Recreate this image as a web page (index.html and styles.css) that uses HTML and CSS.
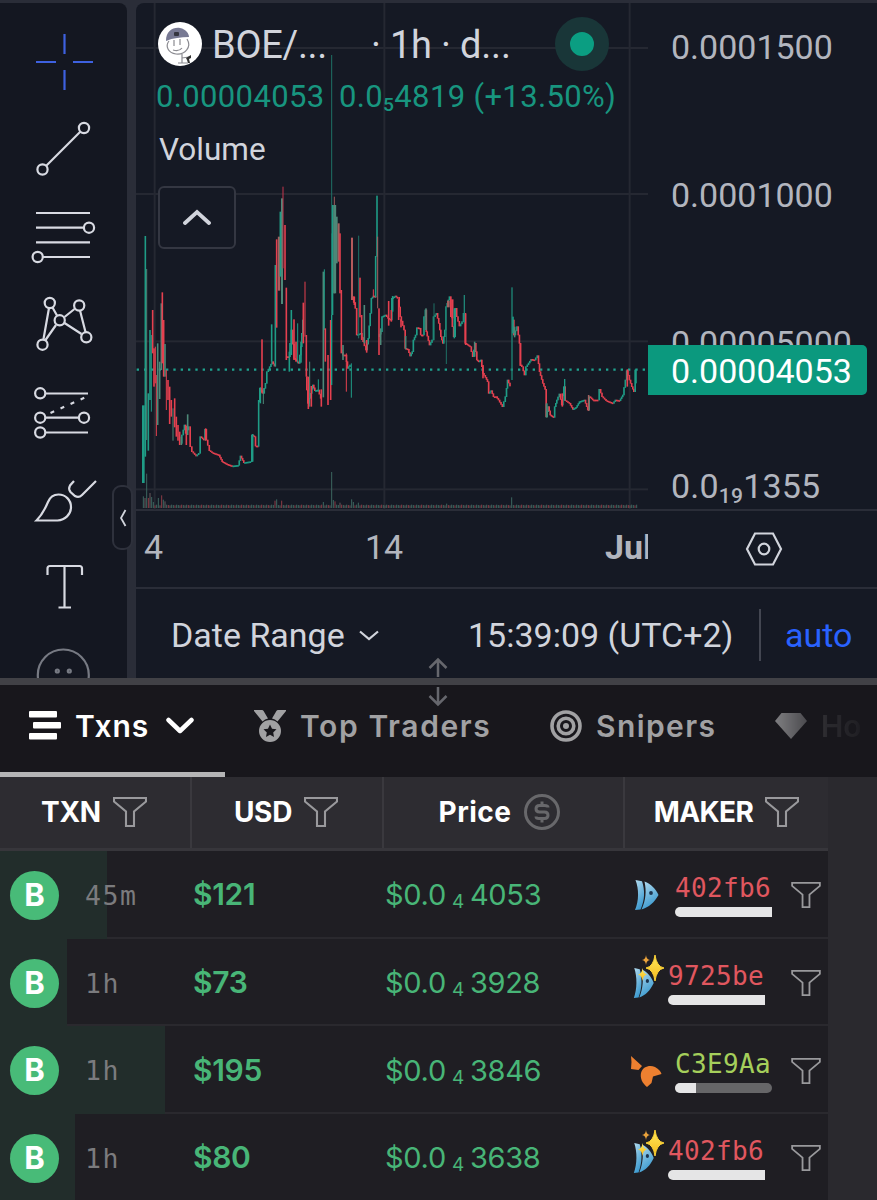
FILE: index.html
```html
<!DOCTYPE html>
<html lang="en">

<head>
    <meta charset="UTF-8">
    <meta name="viewport" content="width=device-width, initial-scale=1.0">
    <title>BOE Chart</title>
    <link rel="stylesheet" href="styles.css">
</head>

<body>
    <!-- Shared icons -->
    <svg class="defs" width="0" height="0">
        <defs>
            <linearGradient id="fish-blue" x1="0" y1="0" x2="0.4" y2="1">
                <stop offset="0" stop-color="#b5dcee" />
                <stop offset="1" stop-color="#3d9bd0" />
            </linearGradient>
            <linearGradient id="gold" x1="0" y1="0" x2="0" y2="1">
                <stop offset="0" stop-color="#ffe95c" />
                <stop offset="1" stop-color="#f5b91c" />
            </linearGradient>
        </defs>
        <symbol id="filter" viewBox="0 0 34 30">
            <path d="M1 1H33V4.500L21 14.500V29H13V14.500L1 4.500Z" fill="none" stroke="currentColor" stroke-width="2.100" />
        </symbol>
        <symbol id="fish" viewBox="0 0 26 32" preserveAspectRatio="none">
            <path d="M1.500 1L8 2.200C11 11 11 21 6.500 30.500L1 31C5 22 5 10 1.500 1Z" fill="url(#fish-blue)" />
            <path d="M10.500 2.500C17 5 22 10 24.500 16C20 24 15 28 7.500 30.500C12 21 12.500 12 10.500 2.500Z" fill="url(#fish-blue)" />
            <circle cx="17" cy="14" r="1.900" fill="#1d3550" />
        </symbol>
        <symbol id="sparkles" viewBox="0 0 32 26">
            <path d="M23 0Q24.500 11.500 32 13Q24.500 14.500 23 26Q21.500 14.500 14 13Q21.500 11.500 23 0Z" fill="url(#gold)" stroke="#f9cf35" />
            <path d="M14 0Q14.400 4.600 18 5Q14.400 5.400 14 10Q13.600 5.400 10 5Q13.600 4.600 14 0Z" fill="#e9a23b" />
            <path d="M10.500 13Q11.200 18.800 15 19.500Q11.200 20.200 10.500 26Q9.800 20.200 6 19.500Q9.800 18.800 10.500 13Z" fill="url(#gold)" />
        </symbol>
    </svg>

    <!-- Chart -->
    <div class="chart-area">
        <div class="toolbar">
            <svg class="tools" width="127" height="675" viewBox="0 3 127 675">
                <path class="cursor" d="M64.500 34V54M64.500 70V90M36 62H56M73 62H93" />
                <g class="tool">
                    <path d="M46.500 165.500L80.500 131.500" />
                    <circle cx="42.500" cy="169.500" r="5.100" />
                    <circle cx="84" cy="128" r="5.100" />
                </g>
                <g class="tool">
                    <path d="M36 213H90M36 227.700H83.500M36 242.300H90M43 257H90" />
                    <circle cx="89" cy="227.700" r="5.100" />
                    <circle cx="37.700" cy="257" r="5.100" />
                </g>
                <g class="tool">
                    <path d="M49 308L43.500 339M52.500 307.500L57 315.500M64.500 317L74.500 309M80 310.500L85.500 332M64.500 323L81.500 334M56 325L45.500 340" />
                    <circle cx="49.800" cy="303" r="5.100" />
                    <circle cx="79.200" cy="305.500" r="5.100" />
                    <circle cx="59.700" cy="320.300" r="5.100" />
                    <circle cx="86.300" cy="337.300" r="5.100" />
                    <circle cx="42.500" cy="344.700" r="5.100" />
                </g>
                <g class="tool">
                    <path d="M45.500 393.500H88M45.500 417.700H79M45.500 432.500H88" />
                    <path d="M50.500 413L85 397.500" stroke-dasharray="4 7" />
                    <circle cx="40.200" cy="393.300" r="5.100" />
                    <circle cx="40.200" cy="417.700" r="5.100" />
                    <circle cx="84" cy="417.700" r="5.100" />
                    <circle cx="40.200" cy="432.500" r="5.100" />
                </g>
                <g class="tool">
                    <path d="M36.500 520.500C42 515 45.500 508 48 502C50 497 54 494.500 58.500 494.500C65.500 494.500 71 500 71 507C71 514.500 65 520 57.500 520.500Z" />
                    <path d="M74 481L70 485.500C68.500 488 69 490 70.500 492L75 496C77.500 497.500 80 497 82 495L96 481" />
                </g>
                <path class="tool" d="M47.500 575V568.500Q47.500 566 50 566H79.500Q82 566 82 568.500V575M64.500 566V607M58.500 607.500H71" />
                <g class="tool smile">
                    <circle cx="63.300" cy="675" r="25.500" />
                    <circle cx="57.300" cy="671" r="1.500" />
                    <circle cx="69.300" cy="671" r="1.500" />
                </g>
            </svg>
            <button class="collapse" aria-label="Collapse toolbar">
                <svg width="8" height="18" viewBox="0 0 8 18"><path d="M6.500 1L2 9L6.500 17" /></svg>
            </button>
        </div>

        <div class="chart">
            <div class="pane-row">
                <div class="pane">
                    <svg id="plot" width="512" height="507" viewBox="0 -531 1536 1521"></svg>
                    <div class="legend">
                        <div class="symbol-row">
                            <svg class="coin" width="44" height="44" viewBox="0 0 44 44">
                                <circle cx="22" cy="22" r="22" fill="#fff" />
                                <path d="M11 19C7 24 10 31 18 32C27 33 34 25 29 17M16 18V24M22 17V23M15 28Q21 30 24 26M24 32V41M20 41H30M24 36L31 35" fill="none" stroke="#8b8b91" stroke-width="1.200" />
                                <path d="M8 19C8 9 15 5 22 6C28 7 31 12 31 15C23 15 15 16 8 19Z" fill="#777993" />
                                <rect x="16" y="10" width="5" height="4" rx="1" fill="#34353f" />
                                <path d="M28 36L33 33V36L31 37L32 41H30L29 38Z" fill="#333" />
                            </svg>
                            <span class="name">BOE/...</span>
                            <span class="interval">· 1h · d...</span>
                            <span class="status"></span>
                        </div>
                        <div class="values">
                            <span class="last">0.00004053</span>
                            <span class="change">0.0<sub>5</sub>4819 (+13.50%)</span>
                        </div>
                        <div class="volume">Volume</div>
                        <button class="fold" aria-label="Hide indicators">
                            <svg width="28" height="18" viewBox="0 0 28 18"><path d="M2 14L14 3L26 14" /></svg>
                        </button>
                    </div>
                </div>
                <div class="price-axis">
                    <span>0.0001500</span>
                    <span>0.0001000</span>
                    <span>0.00005000</span>
                    <span class="low">0.0<sub>19</sub>1355</span>
                    <div class="price-tag">0.00004053</div>
                </div>
            </div>
            <div class="time-axis">
                <div class="dates">
                    <span class="d1">4</span>
                    <span class="d2">14</span>
                    <span class="d3">Jul</span>
                </div>
                <svg class="settings" width="38" height="34" viewBox="0 0 38 34">
                    <path d="M10 1.500H28L36 17L28 32.500H10L2 17Z" />
                    <circle cx="19" cy="17" r="5.300" />
                </svg>
            </div>
            <div class="bottom-bar">
                <span class="range">Date Range</span>
                <svg class="caret" width="20" height="11" viewBox="0 0 20 11"><path d="M1 1.500L10 9L19 1.500" /></svg>
                <span class="clock">15:39:09 (UTC+2)</span>
                <span class="sep"></span>
                <span class="auto">auto</span>
            </div>
        </div>
    </div>

    <div class="splitter">
        <svg width="20" height="50" viewBox="0 0 20 50">
            <path d="M10 20V3M1.500 11L10 2.500L18.500 11M10 30V47M1.500 39L10 47.500L18.500 39" />
        </svg>
    </div>

    <!-- Tabs -->
    <nav class="tabs">
        <a class="tab active">
            <svg width="32" height="30" viewBox="0 0 32 30" fill="currentColor">
                <rect width="28" height="6.500" rx="1" /><rect x="4" y="11" width="28" height="6.500" rx="1" /><rect y="22" width="28" height="6.500" rx="1" />
            </svg>
            <span>Txns</span>
            <svg class="chevron" width="28" height="18" viewBox="0 0 28 18"><path d="M2.500 3L14 14L25.500 3" /></svg>
        </a>
        <a class="tab traders">
            <svg width="32" height="32" viewBox="0 0 32 32" fill="currentColor">
                <path d="M0 0H8Q9 0 9.600 1L14 8.500Q11 9 8.500 11.500L0 1Z" />
                <path d="M32 0H24Q23 0 22.400 1L18 8.500Q21 9 23.500 11.500L32 1Z" />
                <path fill-rule="evenodd" d="M16 10A11 11 0 1 1 16 32A11 11 0 1 1 16 10ZM16 14.500L14 18.700L9.500 19.300L12.800 22.500L12 27L16 24.800L20 27L19.200 22.500L22.500 19.300L18 18.700Z" />
            </svg>
            <span>Top Traders</span>
        </a>
        <a class="tab snipers">
            <svg width="32" height="32" viewBox="0 0 32 32" fill="none" stroke="currentColor" stroke-width="3.600">
                <circle cx="16" cy="16" r="14" /><circle cx="16" cy="16" r="7.800" />
                <circle cx="16" cy="16" r="3" fill="currentColor" stroke="none" />
            </svg>
            <span>Snipers</span>
        </a>
        <a class="tab holders">
            <svg width="32" height="26" viewBox="0 0 32 26" fill="currentColor"><path d="M6.500 0H25.500L32 8L16 26L0 8Z" /></svg>
            <span>Ho</span>
        </a>
    </nav>

    <!-- Transactions -->
    <div class="table">
        <div class="thead">
            <div class="th"><span class="h-txn">TXN</span><svg class="filter"><use href="#filter" /></svg></div>
            <div class="th"><span class="h-usd">USD</span><svg class="filter"><use href="#filter" /></svg></div>
            <div class="th price"><span class="h-price">Price</span>
                <svg class="dollar" width="36" height="36" viewBox="0 0 36 36">
                    <circle cx="18" cy="18" r="16.500" />
                    <path d="M18 7.500V11M18 25V28.500M24 13.500Q24 11.500 20.500 11.500H15.500Q12 11.500 12 14.700Q12 18 15.500 18H20.500Q24 18 24 21.300Q24 24.500 20.500 24.500H15Q12 24.500 12 22.500" />
                </svg>
            </div>
            <div class="th"><span class="h-maker">MAKER</span><svg class="filter"><use href="#filter" /></svg></div>
        </div>
        <div id="rows"></div>
    </div>

    <script src="script.js"></script>
</body>

</html>
```

FILE: styles.css
```css
* {
    box-sizing: border-box;
}

body {
    margin: 0;
    width: 877px;
    height: 1200px;
    overflow: hidden;
    background: #2a292e;
    font-family: Roboto, sans-serif;
    color: #d1d4dc;
}

button {
    padding: 0;
    background: #151924;
}

svg {
    display: block;
    flex: none;
}

.defs {
    position: absolute;
}

/* Chart */
.chart-area {
    display: flex;
    gap: 9px;
    height: 678px;
    padding-top: 3px;
    background: #2a2d38;
}

.toolbar {
    position: relative;
    width: 127px;
    background: #141721;
    border-top-right-radius: 8px;
}

.tool,
.cursor {
    fill: none;
    stroke: #d8dae2;
    stroke-width: 2.2;
}

.cursor {
    stroke: #3e61e0;
}

.smile {
    stroke: #777a83;
}

.collapse {
    position: absolute;
    left: 112px;
    top: 482px;
    width: 21px;
    height: 65px;
    border: 2px solid #2e313c;
    border-radius: 9px;
    background: #141721;
    display: flex;
    align-items: center;
    justify-content: center;
}

.collapse path {
    fill: none;
    stroke: #d1d4dc;
    stroke-width: 1.8;
}

.chart {
    flex: 1;
    display: flex;
    flex-direction: column;
    background: #151924;
    border-top-left-radius: 8px;
}

.pane-row {
    display: flex;
    height: 508px;
    border-bottom: 2px solid #2a2d38;
}

.pane {
    position: relative;
    width: 512px;
}

.legend {
    position: absolute;
    left: 22px;
    top: 14px;
    width: 490px;
}

.symbol-row {
    display: flex;
    align-items: center;
    height: 54px;
    font-size: 38px;
    white-space: pre;
}

.name {
    width: 159px;
    margin-left: 10px;
    padding-top: 2px;
    letter-spacing: -0.3px;
}

.interval {
    width: 184px;
    padding-top: 2px;
    letter-spacing: -0.2px;
}

.status {
    width: 54px;
    height: 54px;
    border-radius: 50%;
    border: 15px solid #193638;
    background: #0b9e82;
}

.values {
    display: flex;
    height: 52px;
    line-height: 52px;
    margin-left: -2px;
    font-size: 31px;
    letter-spacing: 0.35px;
    color: #18957f;
}

.last {
    width: 183px;
}

.change {
    letter-spacing: 0.35px;
}

sub {
    font-size: 0.62em;
    font-weight: 500;
    vertical-align: baseline;
    position: relative;
    top: 0.22em;
    line-height: 1;
}

.volume {
    height: 52px;
    line-height: 53px;
    padding-left: 1px;
    font-size: 31.5px;
}

.fold {
    display: flex;
    align-items: center;
    justify-content: center;
    width: 78px;
    height: 63px;
    margin-top: 11px;
    border: 2px solid #343742;
    border-radius: 6px;
}

.fold path {
    fill: none;
    stroke: #d1d4dc;
    stroke-width: 3.8;
    stroke-linecap: round;
}

.price-axis {
    position: relative;
    flex: 1;
    display: flex;
    flex-direction: column;
    gap: 108px;
    padding: 24px 0 0 23px;
    font-size: 34px;
    line-height: 40px;
    color: #b2b5be;
}

.price-axis .low {
    margin-top: -5px;
    letter-spacing: 0.2px;
}

.price-tag {
    position: absolute;
    left: 0;
    top: 342px;
    width: 219px;
    height: 50px;
    padding-left: 23px;
    line-height: 53px;
    background: #0b997e;
    color: #fff;
    border-radius: 0 5px 5px 0;
}

.time-axis {
    display: flex;
    align-items: center;
    height: 78px;
    border-bottom: 2px solid #2a2d38;
}

.dates {
    display: flex;
    width: 512px;
    margin-top: -4px;
    overflow: hidden;
    font-size: 34px;
    color: #b2b5be;
}

.dates span {
    flex: none;
}

.d1 {
    width: 221px;
    padding-left: 8px;
}

.d2 {
    width: 248px;
    padding-left: 8px;
}

.d3 {
    font-weight: 700;
}

.settings {
    margin-left: 97px;
}

.settings path,
.settings circle,
.caret path {
    fill: none;
    stroke: #d1d4dc;
    stroke-width: 2.2;
}

.bottom-bar {
    display: flex;
    align-items: center;
    flex: 1;
    padding: 3px 0 0 35px;
    font-size: 34px;
    white-space: nowrap;
}

.range {
    width: 188px;
}

.clock {
    width: 291px;
    margin-left: 89px;
}

.sep {
    width: 2px;
    height: 52px;
    background: #434651;
}

.auto {
    margin-left: 24px;
    color: #2962ff;
}

.splitter {
    position: relative;
    height: 7px;
    background: #414146;
}

.splitter svg {
    position: absolute;
    left: 428px;
    top: -21px;
}

.splitter path {
    fill: none;
    stroke: #66676d;
    stroke-width: 2.5;
}

/* Tabs */
.tabs {
    display: flex;
    height: 92px;
    background: #18171c;
    overflow: hidden;
    font-family: Inter, sans-serif;
    font-size: 30px;
    font-weight: 600;
    color: #a1a1a3;
}

.tab {
    display: flex;
    align-items: center;
    flex: none;
    padding-bottom: 10px;
}

.active {
    width: 225px;
    padding: 0 0 5px 29px;
    color: #fff;
    border-bottom: 5px solid #b5b5b6;
}

.active span {
    width: 91px;
    margin-left: 14px;
    letter-spacing: 0.9px;
}

.chevron path {
    fill: none;
    stroke: #fff;
    stroke-width: 4.5;
    stroke-linecap: round;
    stroke-linejoin: round;
}

.traders {
    width: 325px;
    padding-left: 29px;
    letter-spacing: 1.6px;
}

.traders span,
.snipers span {
    margin-left: 14px;
}

.snipers {
    width: 225px;
    letter-spacing: 1.4px;
}

.holders {
    width: 102px;
    -webkit-mask-image: linear-gradient(90deg, rgba(0, 0, 0, 0.75), rgba(0, 0, 0, 0.45) 25%, rgba(0, 0, 0, 0.14) 50%, rgba(0, 0, 0, 0.07) 80%, transparent 88%);
    mask-image: linear-gradient(90deg, rgba(0, 0, 0, 0.75), rgba(0, 0, 0, 0.45) 25%, rgba(0, 0, 0, 0.14) 50%, rgba(0, 0, 0, 0.07) 80%, transparent 88%);
}

.holders span {
    margin-left: 14px;
}

/* Table */
.table {
    width: 828px;
    font-family: Inter, sans-serif;
}

.thead,
.row {
    display: grid;
    grid-template-columns: 192px 192px 241px 203px;
}

.thead {
    height: 74px;
    background: #2d2c31;
    border-bottom: 3px solid #37363b;
    color: #fff;
    font-size: 28px;
    font-weight: 700;
}

.th {
    display: flex;
    align-items: center;
    justify-content: center;
    gap: 12px;
    padding-right: 2px;
    padding-bottom: 2px;
    border-right: 2px solid #3a393e;
}

.h-txn,
.h-usd {
    letter-spacing: -0.3px;
}

.h-price {
    letter-spacing: 0.5px;
}

.h-maker {
    letter-spacing: -0.6px;
}

.th:last-child {
    padding-right: 0;
    border-right: 0;
}

.th.price {
    padding-right: 9px;
}

.filter {
    width: 34px;
    height: 30px;
    color: #99999c;
}

.dollar {
    fill: none;
    stroke: #68686b;
    stroke-width: 3;
}

.row {
    position: relative;
    height: 87.7px;
    padding-top: 3px;
    align-items: center;
    background: #1f1e23;
    border-bottom: 2px solid #2a292e;
    color: #48b577;
}

.fill {
    position: absolute;
    left: 0;
    top: 0;
    height: 88px;
    background: #222d2b;
}

.txn {
    position: relative;
    display: flex;
    align-items: center;
    padding-left: 10px;
    gap: 26px;
}

.badge {
    width: 49px;
    height: 49px;
    border-radius: 50%;
    background: #48bb78;
    color: #fff;
    font-size: 31px;
    font-weight: 700;
    line-height: 48px;
    text-align: center;
}

.age {
    font-family: "DejaVu Sans Mono", monospace;
    font-size: 26.5px;
    letter-spacing: 1.5px;
    color: #7b7b7e;
}

.usd {
    margin-top: -2px;
    padding-left: 1px;
    font-size: 30px;
    font-weight: 600;
    letter-spacing: -0.3px;
}

.cost {
    margin-top: -1px;
    padding-left: 1px;
    font-size: 29px;
    letter-spacing: -0.3px;
}

.cost sub {
    top: 3px;
    margin: 0 6px;
    font-size: 19px;
    font-weight: 400;
}

.maker {
    position: relative;
    display: flex;
    align-items: center;
    padding-left: 9px;
}

.maker .fish {
    width: 26px;
    height: 32px;
}

.sparkles {
    position: absolute;
    left: 7px;
    top: -6px;
    width: 32px;
    height: 26px;
}

.wallet {
    width: 97px;
    margin-left: 15px;
    font-family: "DejaVu Sans Mono", monospace;
    font-size: 26px;
    line-height: 30px;
    letter-spacing: 0.35px;
    white-space: nowrap;
    color: #e0575f;
}

.new {
    padding-left: 8px;
}

.new .fish {
    width: 22px;
}

.new .wallet {
    margin-left: 13px;
    margin-right: 7px;
}

.fox .wallet {
    color: #a5cf5b;
}

.fox {
    padding-left: 5px;
}

.fox .wallet {
    margin-left: 13px;
}

.meter {
    height: 10px;
    margin-top: 4px;
    border-radius: 5px 0 0 5px;
    overflow: hidden;
    background: #666668;
}

.fox .meter {
    border-radius: 5px;
}

.meter div {
    height: 10px;
    background: #e5e5e6;
}

.maker .filter {
    width: 30px;
    height: 26px;
    margin-left: 19px;
}
```

FILE: script.js
```javascript
const NS = 'http://www.w3.org/2000/svg';
const plot = document.getElementById('plot');
const UP = '#1f9c86';
const DOWN = '#e5404f';
const MIX = '#4d8878';

const add = (name, attrs) => {
    const el = document.createElementNS(NS, name);
    for (const key in attrs) el.setAttribute(key, attrs[key]);
    plot.appendChild(el);
};

const bar = (x, top, bottom, color, width = 4.8) => {
    add('rect', { x: x - width / 2, y: top, width, height: Math.max(bottom - top, 5), fill: color });
};

// Grid
[-396, 42, 484, 928].forEach((y) => add('rect', { x: 0, y: y - 3, width: 1536, height: 6, fill: '#252832' }));
[56, 745, 1481].forEach((x) => add('rect', { x: x - 3, y: -531, width: 6, height: 1521, fill: '#252832' }));

// Price line
add('path', { d: 'M2 569H1536', stroke: '#1fa38e', 'stroke-width': 7, 'stroke-dasharray': '7 15', fill: 'none' });

// Quiet stretches, drawn as small steps between the points
const trends = [
    [[135, 790], [140, 765], [147, 735], [151, 760], [160, 740], [165, 800], [170, 815], [182, 828], [190, 820], [195, 770], [205, 780], [209, 748], [213, 780], [222, 812], [230, 818], [250, 825], [260, 845], [275, 853], [290, 858], [308, 856], [315, 828], [325, 848], [345, 845], [350, 765], [357, 770], [360, 798], [367, 798]],
    [[370, 665], [373, 625], [383, 640], [390, 610], [395, 575], [403, 560], [410, 545], [417, 558]],
    [[451, 530], [460, 530], [468, 450], [476, 535], [490, 550], [496, 500], [502, 420]],
    [[511, 590], [517, 670], [526, 640], [532, 615], [538, 632], [548, 630], [556, 655]],
    [[616, 510], [622, 525], [630, 525], [636, 565], [644, 555]],
    [[651, 350], [660, 385], [664, 465], [676, 460], [683, 485], [692, 510], [698, 475], [704, 400], [708, 355], [714, 348], [720, 350]],
    [[729, 470], [736, 455], [740, 410], [750, 405], [758, 415], [765, 420], [770, 355], [780, 348], [786, 355]],
    [[788, 352], [794, 410], [806, 450], [809, 505], [817, 508], [824, 528], [830, 515], [834, 480], [840, 465], [845, 443], [852, 445], [856, 465], [862, 465], [866, 410], [870, 390], [872, 455], [882, 495], [890, 480], [895, 410], [903, 400], [910, 430], [916, 470], [922, 490], [928, 450], [932, 380], [942, 350], [947, 410], [955, 470], [960, 385], [964, 410], [972, 438], [980, 425], [985, 400], [990, 490], [1004, 500], [1012, 530], [1018, 490], [1024, 540], [1030, 545], [1036, 540], [1042, 580], [1050, 592], [1056, 605], [1060, 640], [1067, 632], [1074, 650], [1082, 650], [1089, 660], [1101, 680], [1110, 650], [1116, 600], [1124, 618]],
    [[1131, 420], [1136, 465], [1145, 440], [1152, 490], [1155, 555], [1160, 560], [1167, 585], [1172, 560], [1187, 538], [1197, 540], [1206, 527], [1212, 575], [1222, 610], [1229, 628], [1232, 710], [1238, 680], [1244, 705], [1254, 712], [1258, 680], [1264, 660], [1272, 642], [1279, 675], [1285, 620], [1290, 662], [1302, 670], [1312, 688], [1322, 682], [1332, 665], [1347, 660], [1357, 690], [1362, 650], [1372, 660], [1387, 660], [1392, 628], [1400, 650], [1412, 662], [1432, 670], [1440, 660], [1452, 662], [1462, 645], [1470, 600], [1474, 572], [1482, 600], [1489, 620], [1495, 635], [1500, 570]],
];

trends.forEach((points) => {
    for (let i = 1; i < points.length; i++) {
        const [x1, y1] = points[i - 1];
        const [x2, y2] = points[i];
        const steps = Math.max(1, Math.round((x2 - x1) / 4));
        for (let s = 0; s < steps; s++) {
            const a = y1 + (y2 - y1) * s / steps;
            const b = y1 + (y2 - y1) * (s + 1) / steps;
            const x = x1 + (x2 - x1) * (s + 0.5) / steps;
            bar(x, Math.min(a, b) - 1, Math.max(a, b) + 1, y2 < y1 ? UP : DOWN, 5);
        }
    }
});

// Candles with a long range: x, high, low, color, width
const candles = [
    [22, 676, 909, UP, 8], [28, 168, 830, UP], [32, 267, 780, MIX, 3], [37, 640, 812, UP], [42, 450, 660, UP], [46, 465, 695, UP, 3],
    [50, 390, 520, DOWN], [54, 505, 620, DOWN], [58, 500, 610, DOWN, 3], [61, 585, 768, DOWN, 3], [65, 490, 735, MIX], [71, 545, 657, MIX],
    [76, 370, 570, MIX], [79, 337, 550, DOWN], [83, 420, 590, DOWN], [87, 492, 590, MIX], [91, 570, 690, DOWN, 3], [96, 600, 660, DOWN],
    [101, 620, 732, DOWN], [106, 660, 710, DOWN], [111, 685, 782, MIX, 3], [116, 655, 742, DOWN], [121, 710, 770, DOWN], [126, 735, 782, DOWN],
    [131, 755, 795, DOWN], [136, 770, 795, MIX], [151, 738, 795, DOWN], [155, 703, 765, MIX], [209, 745, 782, DOWN], [350, 762, 845, UP],
    [368, 660, 800, UP], [373, 622, 670, UP], [378, 478, 640, DOWN], [382, 625, 672, MIX, 3], [407, 433, 545, UP], [418, 255, 560, UP],
    [422, 178, 443, DOWN], [429, 170, 332, '#a4605f', 7], [433, 95, 290, UP], [438, 55, 372, MIX, 6], [441, 20, 265, '#c5364c', 3],
    [447, 135, 300, DOWN], [451, 323, 540, DOWN], [460, 515, 575, UP], [466, 390, 525, UP], [474, 418, 540, DOWN], [480, 485, 545, DOWN],
    [485, 430, 550, UP, 3], [495, 485, 548, UP], [502, 368, 490, DOWN], [507, 305, 470, DOWN, 3], [511, 465, 590, DOWN], [517, 590, 687, DOWN],
    [521, 545, 680, MIX, 3], [526, 618, 680, DOWN], [547, 598, 635, UP, 3], [556, 628, 680, DOWN], [562, 275, 652, MIX], [565, 268, 450, UP, 3],
    [568, 445, 545, DOWN], [576, 525, 675, DOWN], [584, 420, 660, DOWN], [587, 160, 615, UP, 4], [587, -375, 405, '#1f7065', 3], [590, 75, 405, UP, 4],
    [595, 50, 340, '#9c5a5b', 3], [596, 75, 340, MIX, 9], [602, 110, 250, MIX, 6], [608, 130, 245, '#a4605f', 6], [612, 160, 340, DOWN],
    [616, 330, 520, DOWN], [621, 495, 540, MIX], [631, 520, 635, DOWN, 3], [646, 550, 653, UP, 3], [648, 173, 360, '#b65a5c', 6],
    [655, 350, 375, DOWN], [668, 167, 475, '#1f7065', 3], [672, 293, 412, DOWN], [677, 405, 480, DOWN], [685, 375, 490, MIX], [692, 480, 518, DOWN],
    [712, 328, 352, DOWN, 3], [719, 228, 352, UP], [723, 47, 230, UP], [725, 170, 385, '#a4605f', 3], [729, 385, 525, DOWN], [734, 445, 495, MIX],
    [758, 363, 437, DOWN], [766, 390, 425, DOWN], [770, 348, 395, UP], [788, 358, 420, DOWN], [795, 418, 442, DOWN], [809, 468, 508, MIX],
    [870, 385, 450, MIX], [894, 370, 480, '#1f7065', 3], [931, 380, 552, '#1f7065', 3], [937, 362, 382, '#a4605f', 8], [949, 358, 415, DOWN, 7],
    [955, 385, 475, UP], [985, 345, 430, '#1f8576', 4], [989, 400, 495, DOWN], [1016, 485, 530, MIX], [1041, 555, 595, DOWN], [1128, 322, 600, '#1f8576', 4],
    [1131, 410, 460, UP], [1136, 440, 472, MIX], [1153, 490, 558, DOWN], [1232, 670, 713, MIX, 6], [1279, 640, 680, DOWN], [1286, 597, 662, UP, 4],
    [1358, 645, 693, '#a4605f'], [1474, 568, 620, DOWN], [1500, 568, 610, UP],
];
candles.forEach((c) => bar(...c));

// Volume
const spikes = { 22: 35, 27: 30, 32: 103, 37: 30, 42: 45, 47: 33, 52: 18, 67: 30, 77: 38, 82: 25, 87: 20, 417: 22, 422: 26, 437: 22, 562: 18, 587: 108, 592: 24, 597: 20, 612: 16, 647: 26, 652: 18, 667: 16, 1127: 32, 932: 13 };
for (let x = 22; x < 1503; x += 5) {
    const h = spikes[x] || 8 + (x % 3);
    bar(x, 984 - h, 984, x % 4 === 1 ? '#8c3b45' : x % 3 ? '#3c665f' : '#6a5a5c', 3);
}

// Transactions
const txns = [
    { fill: 107, age: '45m', usd: '$121', price: '4053', maker: '402fb6', icon: 'solo', level: 100 },
    { fill: 67, age: '1h', usd: '$73', price: '3928', maker: '9725be', icon: 'new', level: 100 },
    { fill: 165, age: '1h', usd: '$195', price: '3846', maker: 'C3E9Aa', icon: 'fox', level: 22 },
    { fill: 75, age: '1h', usd: '$80', price: '3638', maker: '402fb6', icon: 'new', level: 100 },
];

const fox = `<svg width="32" height="32" viewBox="0 0 32 32" fill="#ed8030">
    <path d="M1 1L12 11L8.500 15L1 14Q2 7 1 1Z" />
    <path d="M11 18C13 11 20 10 25 12C29 14 31 17 31.500 19L23 21.500L21.500 28L17 32C12 28 10 23 11 18Z" />
</svg>`;
const fish = '<svg class="fish"><use href="#fish" /></svg>';
const sparkles = '<svg class="sparkles"><use href="#sparkles" /></svg>';

document.getElementById('rows').innerHTML = txns.map((t) => `
    <div class="row">
        <div class="fill" style="width: ${t.fill}px"></div>
        <div class="txn"><span class="badge">B</span><span class="age">${t.age}</span></div>
        <div class="usd">${t.usd}</div>
        <div class="cost">$0.0<sub>4</sub>${t.price}</div>
        <div class="maker ${t.icon}">
            ${t.icon === 'fox' ? fox : fish}${t.icon === 'new' ? sparkles : ''}
            <div class="wallet">${t.maker}<div class="meter"><div style="width: ${t.level}%"></div></div></div>
            <svg class="filter"><use href="#filter" /></svg>
        </div>
    </div>`).join('');
```
